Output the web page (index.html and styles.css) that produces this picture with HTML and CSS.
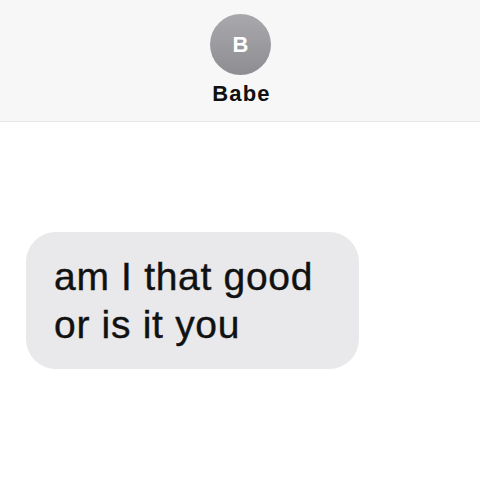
FILE: index.html
```html
<!DOCTYPE html>
<html>
<head>
<meta charset="utf-8">
<link rel="stylesheet" href="styles.css">
</head>
<body>
<header class="header">
  <div class="avatar">B</div>
  <div class="name">Babe</div>
</header>
<main class="thread">
  <div class="bubble">am I that good or is it you</div>
</main>
</body>
</html>
```
FILE: styles.css
```css
html, body {
  margin: 0;
  padding: 0;
  background: #ffffff;
  font-family: "Liberation Sans", Arial, sans-serif;
}
.header {
  background: #f7f7f7;
  border-bottom: 1px solid #e6e6e6;
  display: flex;
  flex-direction: column;
  align-items: center;
  padding-top: 14px;
  height: 107px;
}
.avatar {
  width: 61px;
  height: 61px;
  border-radius: 50%;
  background: linear-gradient(#a8a8ad, #8d8d92);
  color: #ffffff;
  font-weight: bold;
  font-size: 22px;
  display: flex;
  align-items: center;
  justify-content: center;
  margin-left: 1px;
}
.name {
  margin-top: 6px;
  font-size: 22px;
  font-weight: bold;
  letter-spacing: 1.2px;
  color: #111111;
  margin-left: 3px;
}
.thread {
  padding: 110px 0 0 26px;
}
.bubble {
  width: 333px;
  box-sizing: border-box;
  background: #e9e9eb;
  border-radius: 30px;
  padding: 21px 18px 20px 28px;
  font-size: 39px;
  line-height: 48px;
  letter-spacing: 0.7px;
  color: #111111;
  -webkit-text-stroke: 0.4px #111111;
}
```
